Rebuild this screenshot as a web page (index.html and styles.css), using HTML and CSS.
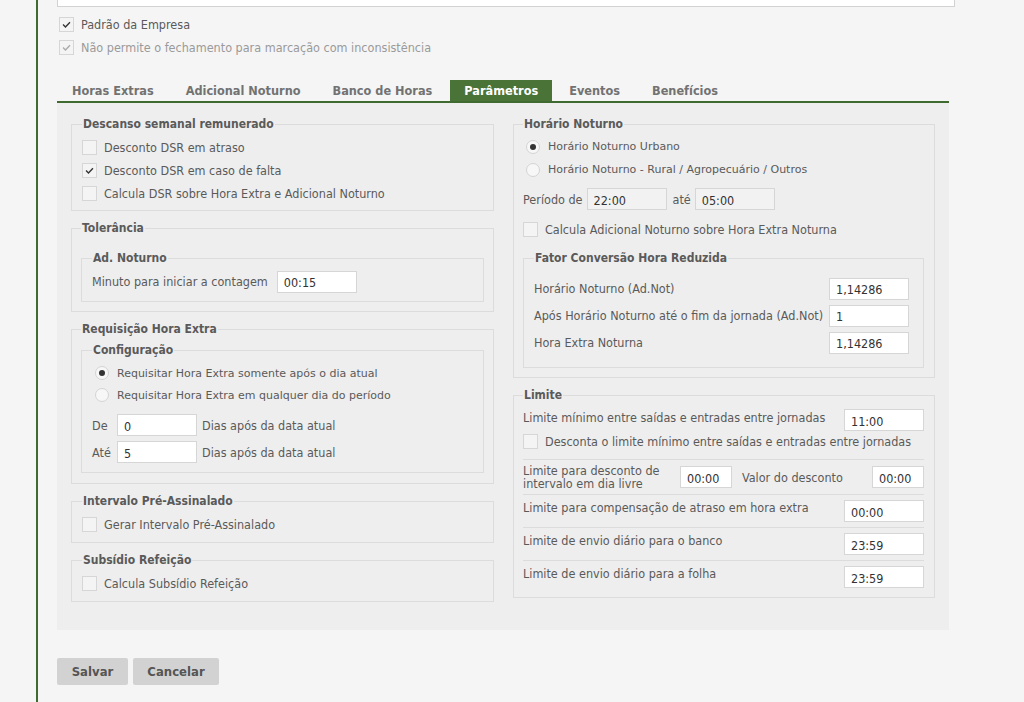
FILE: index.html
```html
<!DOCTYPE html>
<html lang="pt-BR">
<head>
<meta charset="utf-8">
<title>Parâmetros</title>
<link rel="stylesheet" href="styles.css">
</head>
<body>
<div class="page">
  <div class="top-input"></div>
  <div class="top-checks">
    <label class="check-row"><span class="cb checked"><svg viewBox="0 0 15 15"><path d="M3.5 7.5 L6.3 10.3 L11.5 4.8" /></svg></span><span>Padrão da Empresa</span></label>
    <label class="check-row disabled"><span class="cb checked"><svg viewBox="0 0 15 15"><path d="M3.5 7.5 L6.3 10.3 L11.5 4.8" /></svg></span><span>Não permite o fechamento para marcação com inconsistência</span></label>
  </div>

  <div class="tabs">
    <div class="tab">Horas Extras</div>
    <div class="tab">Adicional Noturno</div>
    <div class="tab">Banco de Horas</div>
    <div class="tab active">Parâmetros</div>
    <div class="tab">Eventos</div>
    <div class="tab">Benefícios</div>
  </div>

  <div class="panel">
    <div class="col">
      <fieldset class="fs fs-dsr">
        <legend>Descanso semanal remunerado</legend>
        <label class="check-row"><span class="cb"></span><span>Desconto DSR em atraso</span></label>
        <label class="check-row"><span class="cb checked"><svg viewBox="0 0 15 15"><path d="M3.5 7.5 L6.3 10.3 L11.5 4.8" /></svg></span><span>Desconto DSR em caso de falta</span></label>
        <label class="check-row"><span class="cb"></span><span>Calcula DSR sobre Hora Extra e Adicional Noturno</span></label>
      </fieldset>

      <fieldset class="fs fs-outer">
        <legend>Tolerância</legend>
        <fieldset class="fs fs-inner fs-adnot">
          <legend>Ad. Noturno</legend>
          <div class="field-row">
            <span class="lbl">Minuto para iniciar a contagem</span>
            <input class="inp" type="text" value="00:15">
          </div>
        </fieldset>
      </fieldset>

      <fieldset class="fs fs-outer fs-req">
        <legend>Requisição Hora Extra</legend>
        <fieldset class="fs fs-inner fs-config">
          <legend>Configuração</legend>
          <label class="radio-row"><span class="rb checked"></span><span>Requisitar Hora Extra somente após o dia atual</span></label>
          <label class="radio-row"><span class="rb"></span><span>Requisitar Hora Extra em qualquer dia do período</span></label>
          <div class="field-row days first">
            <span class="lbl short">De</span>
            <input class="inp" type="text" value="0">
            <span class="lbl">Dias após da data atual</span>
          </div>
          <div class="field-row days">
            <span class="lbl short">Até</span>
            <input class="inp" type="text" value="5">
            <span class="lbl">Dias após da data atual</span>
          </div>
        </fieldset>
      </fieldset>

      <fieldset class="fs fs-single">
        <legend>Intervalo Pré-Assinalado</legend>
        <label class="check-row"><span class="cb"></span><span>Gerar Intervalo Pré-Assinalado</span></label>
      </fieldset>

      <fieldset class="fs fs-single">
        <legend>Subsídio Refeição</legend>
        <label class="check-row"><span class="cb"></span><span>Calcula Subsídio Refeição</span></label>
      </fieldset>
    </div>

    <div class="col">
      <fieldset class="fs fs-noturno">
        <legend>Horário Noturno</legend>
        <label class="radio-row"><span class="rb checked"></span><span>Horário Noturno Urbano</span></label>
        <label class="radio-row"><span class="rb"></span><span>Horário Noturno - Rural / Agropecuário / Outros</span></label>
        <div class="field-row periodo">
          <span class="lbl">Período de</span>
          <input class="inp gray" type="text" value="22:00">
          <span class="lbl ate">até</span>
          <input class="inp gray" type="text" value="05:00">
        </div>
        <label class="check-row"><span class="cb"></span><span>Calcula Adicional Noturno sobre Hora Extra Noturna</span></label>
        <fieldset class="fs fs-inner fs-fator">
          <legend>Fator Conversão Hora Reduzida</legend>
          <div class="fator-row"><span class="lbl">Horário Noturno (Ad.Not)</span><input class="inp" type="text" value="1,14286"></div>
          <div class="fator-row"><span class="lbl">Após Horário Noturno até o fim da jornada (Ad.Not)</span><input class="inp" type="text" value="1"></div>
          <div class="fator-row"><span class="lbl">Hora Extra Noturna</span><input class="inp" type="text" value="1,14286"></div>
        </fieldset>
      </fieldset>

      <fieldset class="fs fs-limite">
        <legend>Limite</legend>
        <div class="lim-group">
          <div class="lim-first">
            <span class="lbl">Limite mínimo entre saídas e entradas entre jornadas</span>
            <input class="inp" type="text" value="11:00">
          </div>
          <label class="check-row"><span class="cb"></span><span>Desconta o limite mínimo entre saídas e entradas entre jornadas</span></label>
        </div>
        <div class="lim-row lim-double">
          <span class="lbl two-line">Limite para desconto de<br>intervalo em dia livre</span>
          <input class="inp small" type="text" value="00:00">
          <span class="lbl valor">Valor do desconto</span>
          <input class="inp small" type="text" value="00:00">
        </div>
        <div class="lim-row">
          <span class="lbl">Limite para compensação de atraso em hora extra</span>
          <input class="inp" type="text" value="00:00">
        </div>
        <div class="lim-row">
          <span class="lbl">Limite de envio diário para o banco</span>
          <input class="inp" type="text" value="23:59">
        </div>
        <div class="lim-row">
          <span class="lbl">Limite de envio diário para a folha</span>
          <input class="inp" type="text" value="23:59">
        </div>
      </fieldset>
    </div>
  </div>

  <div class="buttons">
    <button class="btn btn-save" type="button">Salvar</button>
    <button class="btn btn-cancel" type="button">Cancelar</button>
  </div>
</div>
</body>
</html>
```

FILE: styles.css
```css
* { box-sizing: border-box; }

html, body {
  margin: 0;
  padding: 0;
  background: #f5f5f5;
}

body {
  font-family: "DejaVu Sans Condensed", "DejaVu Sans", sans-serif;
  font-size: 12.5px;
  color: #5a5a5a;
}

.page {
  margin-left: 36px;
  border-left: 2px solid #3f6b30;
  padding-left: 19px;
  height: 702px;
  overflow: hidden;
}

.top-input {
  width: 898px;
  height: 7px;
  background: #fff;
  border: 1px solid #d2d2d2;
  border-top: 0;
}

.top-checks {
  margin-top: 6px;
}

.top-checks .check-row {
  padding-left: 2px;
  height: 23px;
}

.check-row {
  display: flex;
  align-items: center;
  height: 23px;
  gap: 7px;
  white-space: nowrap;
}

.check-row.disabled { color: #9a9a9a; }

.cb {
  flex: 0 0 15px;
  width: 15px;
  height: 15px;
  border: 1px solid #d6d6d6;
  background: #f4f4f4;
  display: flex;
  align-items: center;
  justify-content: center;
}

.cb svg {
  width: 15px;
  height: 15px;
  fill: none;
  stroke: #333;
  stroke-width: 1.6;
}

.disabled .cb svg { stroke: #aaa; }

/* Tabs */
.tabs {
  margin-top: 21px;
  width: 892px;
  height: 23px;
  display: flex;
  gap: 2px;
  border-bottom: 2px solid #3f6b30;
}

.tab {
  height: 21px;
  line-height: 21px;
  padding: 0 15px;
  font-weight: bold;
  font-size: 12.6px;
  color: #727272;
  white-space: nowrap;
}

.tab.active {
  background: #4a7338;
  color: #fff;
  margin-left: 1px;
  padding: 0 14px;
}

/* Panel */
.panel {
  width: 892px;
  background: #eeeeee;
  padding: 14px 14px 28px 14px;
  display: grid;
  grid-template-columns: 423px 422px;
  column-gap: 19px;
  align-items: start;
}

.col > .fs:last-child { margin-bottom: 0; }

.fs {
  margin: 0 0 10px 0;
  padding: 5px 9px 4px 10px;
  border: 1px solid #dcdcdc;
  min-width: 0;
}

.fs legend {
  font-weight: bold;
  font-size: 12px;
  line-height: 14px;
  padding: 0 1px;
  margin-left: 0;
  color: #5a5a5a;
}

.fs-dsr { padding-bottom: 5px; }

.fs-outer { padding: 16px 9px 9px 9px; }
.fs-req { padding-top: 7px; padding-bottom: 10px; }

.fs-inner { margin: 0; padding: 4px 14px 7px 10px; }

.fs-config { padding-top: 5px; padding-bottom: 9px; }

.fs-single { padding-top: 5px; padding-bottom: 6px; }

.field-row {
  display: flex;
  align-items: center;
  height: 25px;
  gap: 9px;
  white-space: nowrap;
}

.inp {
  width: 80px;
  height: 22px;
  border: 1px solid #d6d6d6;
  background: #fff;
  font-family: "DejaVu Sans Condensed", "DejaVu Sans", sans-serif;
  font-size: 12.5px;
  color: #333;
  padding: 2px 6px 0 6px;
  margin: 0;
  outline: none;
}

.inp.gray { background: #f2f2f2; }
.inp.small { width: 52px; }

.radio-row {
  display: flex;
  align-items: center;
  height: 22px;
  gap: 8px;
  padding-left: 3px;
  font-family: "DejaVu Sans", sans-serif;
  font-size: 11px;
  white-space: nowrap;
}

.rb {
  flex: 0 0 14px;
  width: 14px;
  height: 14px;
  border-radius: 50%;
  border: 1px solid #d4d4d4;
  background: #f7f7f7;
  display: flex;
  align-items: center;
  justify-content: center;
}

.rb.checked::after {
  content: "";
  width: 6px;
  height: 6px;
  border-radius: 50%;
  background: #333;
}

.days { height: 22px; gap: 0; }
.days.first { margin-top: 8px; margin-bottom: 5px; }
.days .short { width: 25px; }
.days .inp { margin-right: 5px; }

/* Right column */
.fs-noturno { padding: 4px 10px 9px 9px; }

.fs-noturno .radio-row { height: 23px; }

.periodo {
  height: 36px;
  gap: 0;
}
.periodo .lbl { margin-right: 4px; }
.periodo .ate { margin-left: 6px; margin-right: 4px; }

.fs-noturno .check-row { height: 24px; }

.fs-fator {
  margin-top: 10px;
  padding: 12px 14px 13px 10px;
}

.fator-row {
  display: flex;
  justify-content: space-between;
  align-items: center;
  height: 23px;
  margin-bottom: 4px;
  white-space: nowrap;
}
.fator-row:last-child { margin-bottom: 0; }

.fs-limite { padding: 7px 10px 4px 9px; }

.lim-group { padding-bottom: 8px; }

.lim-first {
  display: flex;
  justify-content: space-between;
  align-items: center;
  height: 22px;
  white-space: nowrap;
}
.lim-first .lbl { margin-top: -6px; }

.lim-group .check-row { height: 20px; }

.lim-row {
  display: flex;
  justify-content: space-between;
  align-items: flex-start;
  border-top: 1px solid #dcdcdc;
  padding: 4px 0 5px 0;
  white-space: nowrap;
}
.lim-row .lbl { line-height: 17px; }
.lim-row .inp { margin-top: 1px; }

.lim-double {
  justify-content: flex-start;
  align-items: center;
  padding: 4px 0 4px 0;
}
.lim-double .two-line { line-height: 13px; width: 157px; }
.lim-double .valor { line-height: 17px; margin: 0 9px 0 10px; flex: 1; }
.lim-double .inp { margin-top: 0; }

/* Buttons */
.buttons {
  margin-top: 28px;
  display: flex;
  gap: 5px;
}

.btn {
  height: 27px;
  border: 0;
  border-radius: 2px;
  background: #d2d2d2;
  font-family: "DejaVu Sans Condensed", "DejaVu Sans", sans-serif;
  font-weight: bold;
  font-size: 13px;
  color: #555;
  padding: 0;
}
.btn-save { width: 71px; }
.btn-cancel { width: 86px; }
```
